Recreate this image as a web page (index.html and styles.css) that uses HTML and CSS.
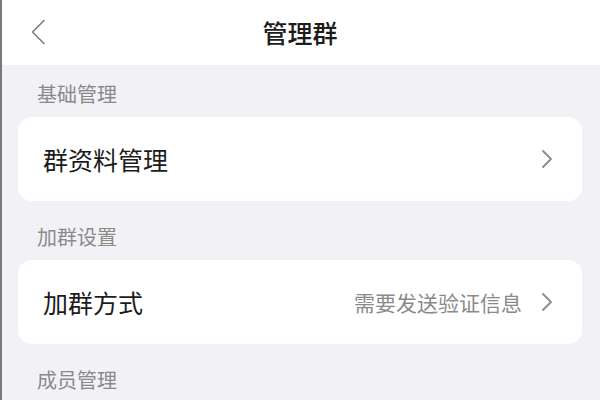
FILE: index.html
```html
<!DOCTYPE html>
<html lang="zh-CN">
<head>
<meta charset="utf-8">
<link rel="stylesheet" href="styles.css">
</head>
<body>
<div class="page">
  <header class="nav">
    <span class="back">
      <svg width="16" height="26" viewBox="0 0 16 26"><path d="M14 1.5 L2.5 13 L14 24.5" fill="none" stroke="#7d7d7d" stroke-width="1.6" stroke-linecap="round" stroke-linejoin="round"/></svg>
    </span>
    <h1 class="title">管理群</h1>
  </header>
  <div class="section-label">基础管理</div>
  <div class="card">
    <span class="item-text">群资料管理</span>
    <span class="item-right">
      <svg class="chev" width="12" height="20" viewBox="0 0 12 20"><path d="M2 2 L10 10 L2 18" fill="none" stroke="#8a8a8a" stroke-width="1.8" stroke-linecap="round" stroke-linejoin="round"/></svg>
    </span>
  </div>
  <div class="section-label">加群设置</div>
  <div class="card">
    <span class="item-text">加群方式</span>
    <span class="item-right">
      <span class="item-value">需要发送验证信息</span>
      <svg class="chev" width="12" height="20" viewBox="0 0 12 20"><path d="M2 2 L10 10 L2 18" fill="none" stroke="#8a8a8a" stroke-width="1.8" stroke-linecap="round" stroke-linejoin="round"/></svg>
    </span>
  </div>
  <div class="section-label">成员管理</div>
</div>
</body>
</html>
```
FILE: styles.css
```css
html, body {
  margin: 0;
  padding: 0;
  height: 100%;
}
body {
  background: #f2f2f6;
  font-family: "Noto Sans CJK SC", "Noto Sans", sans-serif;
  overflow: hidden;
}
.page {
  min-height: 100%;
  border-left: 2px solid #7a7a7a;
  box-sizing: border-box;
}
.nav {
  height: 65px;
  background: #ffffff;
  display: flex;
  align-items: center;
  justify-content: center;
  position: relative;
}
.back {
  position: absolute;
  left: 28px;
  top: 19px;
  display: flex;
}
.title {
  margin: 0 0 0 -2px;
  font-size: 25px;
  font-weight: 500;
  color: #1c1c1c;
  line-height: 1;
}
.section-label {
  padding: 18px 0 12px 35px;
  font-size: 20px;
  line-height: 22px;
  color: #8a8a8a;
}
.card {
  margin: 0 18px 7px 16px;
  height: 84px;
  background: #ffffff;
  border-radius: 14px;
  display: flex;
  align-items: center;
  justify-content: space-between;
  padding: 0 29px 0 25px;
}
.item-text {
  font-size: 25px;
  color: #1c1c1c;
}
.item-right {
  display: flex;
  align-items: center;
  gap: 19px;
}
.item-value {
  font-size: 21px;
  color: #8a8a8a;
}
.chev {
  display: block;
}
```
